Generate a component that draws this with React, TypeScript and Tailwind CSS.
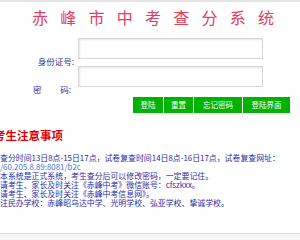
import React from 'react';

const cjk = { fontFamily: '"Noto Sans CJK SC", "Noto Sans", sans-serif' };

export default function App() {
  return (
    <div className="w-[300px] h-[240px] bg-white overflow-hidden flex flex-col border-t-2 border-[#e4e4e4]" style={cjk}>
      <h1 className="mt-[7px] pl-[32px] text-[16px] leading-[16px] tracking-[12.25px] text-[#e0405f] whitespace-nowrap">
        赤峰市中考查分系统
      </h1>

      <div className="mt-[13px] flex flex-col">
        <div className="flex items-start">
          <div className="w-[78px] pr-[4px] mt-[18px] text-right text-[8.5px] leading-[10px] text-[#3030a0]">身份证号:</div>
          <input className="w-[185px] h-[21px] border border-[#d6d6d6] shadow-[inset_1px_1px_2px_#e6e6e6] outline-none" />
        </div>
        <div className="flex items-start">
          <div className="w-[78px] pl-[33px] mt-[18px] text-[8.5px] leading-[10px] text-[#3030a0]">
            <div className="w-[38px] flex justify-between">
              <span>密</span>
              <span>码:</span>
            </div>
          </div>
          <input type="password" className="w-[185px] h-[21px] border border-[#d6d6d6] shadow-[inset_1px_1px_2px_#e6e6e6] outline-none" />
        </div>
      </div>

      <div className="mt-[3px] ml-[133px] flex gap-[1px] text-[7.5px] text-white">
        <button className="w-[30px] h-[16px] bg-[#00b300]">登陆</button>
        <button className="w-[29px] h-[16px] bg-[#00b300]">重置</button>
        <button className="w-[48px] h-[16px] bg-[#00b300]">忘记密码</button>
        <button className="w-[47px] h-[16px] bg-[#00b300]">登陆界面</button>
      </div>

      <h2 className="mt-[16px] ml-[-6px] text-[11.5px] leading-[12px] font-bold text-[#e00000] whitespace-nowrap">考生注意事项</h2>

      <div className="mt-[12px] text-[7.9px] leading-[9px] text-[#2b2ba8] whitespace-nowrap">
        <p>查分时间13日8点-15日17点，试卷复查时间14日8点-16日17点，试卷复查网址：</p>
        <p className="text-[#4a72d4]">/60.205.8.89:8081/b2c</p>
        <p>本系统是正式系统，考生查分后可以修改密码，一定要记住。</p>
        <p>请考生、家长及时关注《赤峰中考》微信账号：cfszkxx。</p>
        <p>请考生、家长及时关注《赤峰中考信息网》。</p>
        <p>注民办学校：赤峰昭乌达中学、光明学校、弘亚学校、挚诚学校。</p>
      </div>

      <div className="mt-auto h-[7px] border-t border-[#dcdcdc] bg-[#f6f6f6]" />
    </div>
  );
}
